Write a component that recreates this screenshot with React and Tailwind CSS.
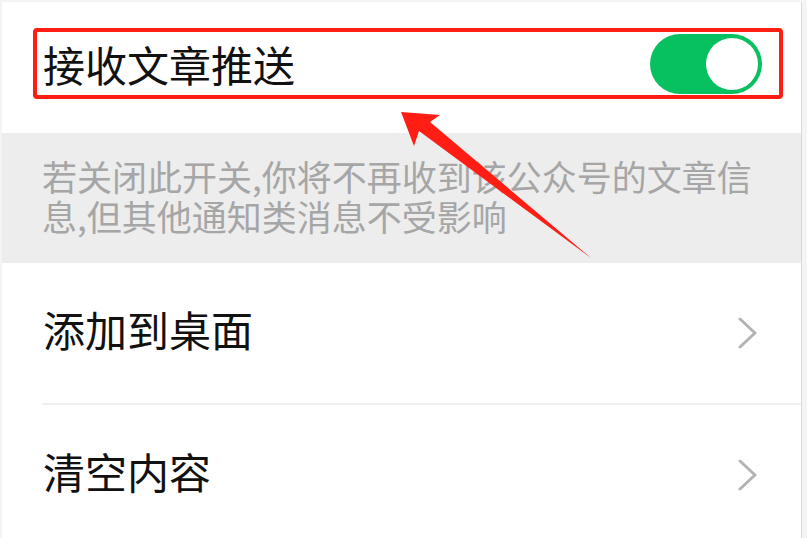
import React from 'react'

function Chevron() {
  return (
    <svg width="22" height="32" viewBox="0 0 22 32" fill="none">
      <path d="M3 2 L18 16 L3 30" stroke="#b3b3b3" strokeWidth="3" strokeLinecap="round" strokeLinejoin="round" />
    </svg>
  )
}

function Toggle() {
  return (
    <div className="flex h-[60px] w-[112px] items-center justify-end rounded-full bg-[#07c160] p-[4px]">
      <div className="h-[52px] w-[52px] rounded-full bg-white" />
    </div>
  )
}

function Row({ label }) {
  return (
    <div className="flex h-[140px] items-center justify-between pl-[41px] pr-[42px]">
      <span className="pb-[8px] text-[42px] leading-none text-[#111]">{label}</span>
      <Chevron />
    </div>
  )
}

export default function App() {
  return (
    <div
      className="relative h-[538px] w-[807px] overflow-hidden bg-[#f4f4f4] pt-[2px] pl-[2px]"
      style={{ fontFamily: '"Noto Sans CJK SC", "Noto Sans", sans-serif' }}
    >
      <div className="h-full w-[800px] border-r border-[#dadada] bg-white">
        {/* switch row */}
        <div className="flex h-[131px] items-start pt-[26px] pl-[31px]">
          <div className="flex h-[71px] w-[750px] items-center justify-between rounded-[4px] border-[4px] border-[#ff1d14] pl-[6px] pr-[17px]">
            <span className="text-[42px] leading-none text-[#111]">接收文章推送</span>
            <Toggle />
          </div>
        </div>

        {/* hint */}
        <div className="bg-[#ededed] pt-[23px] pb-[27px] pl-[40px] pr-[30px] text-[35px] leading-[40px] text-[#a6a6a6]">
          若关闭此开关,你将不再收到该公众号的文章信息,但其他通知类消息不受影响
        </div>

        <Row label="添加到桌面" />
        <div className="ml-[40px] h-[2px] bg-[#f0f0f0]" />
        <Row label="清空内容" />
      </div>

      {/* annotation arrow */}
      <svg className="pointer-events-none absolute left-0 top-0" width="807" height="538">
        <polygon points="401,112 440,115 430,122 591,258 419,131 414,146" fill="#ff1d14" />
      </svg>
    </div>
  )
}
